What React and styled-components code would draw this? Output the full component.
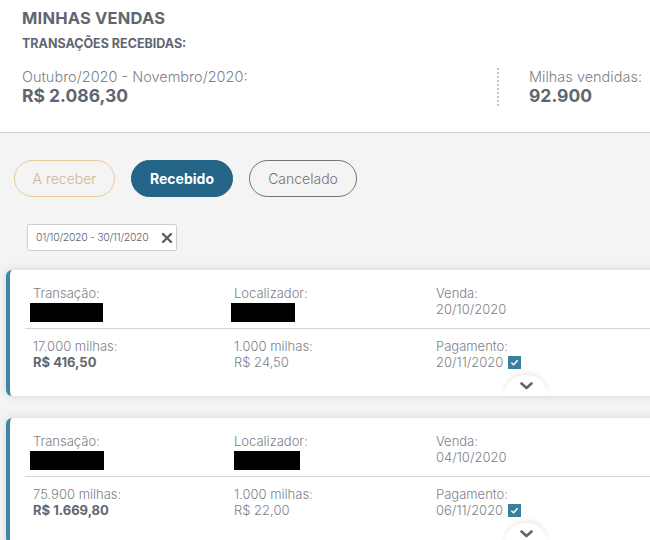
import React from "react";
import styled, { createGlobalStyle } from "styled-components";

const Global = createGlobalStyle`
  html, body { margin: 0; padding: 0; background: #f4f4f4; overflow: hidden; }
  body { font-family: "Inter", "Open Sans", sans-serif; color: #5e6570; }
  * { box-sizing: border-box; }
`;

const Page = styled.div`
  width: 720px;
  min-height: 540px;
  background: #f4f4f4;
`;

const Header = styled.header`
  background: #fff;
  border-bottom: 1px solid #cfcfcf;
  height: 133px;
  padding: 8px 22px 0;
`;

const Title = styled.h1`
  margin: 0;
  font-size: 16.5px;
  line-height: 20px;
  font-weight: 700;
  color: #5f6670;
  letter-spacing: 0.2px;
`;

const Subtitle = styled.h2`
  margin: 9px 0 0;
  font-size: 12.5px;
  line-height: 14px;
  font-weight: 700;
  color: #5f6670;
`;

const Summary = styled.div`
  display: flex;
  align-items: center;
  margin-top: 17px;
`;

const SummaryBlock = styled.div`
  width: ${(p) => p.$w || "auto"};
  display: flex;
  flex-direction: column;
`;

const Separator = styled.div`
  width: 0;
  height: 38px;
  border-left: 2px dotted #c4c4c4;
  margin-right: 30px;
`;

const SumLabel = styled.span`
  font-size: 14.5px;
  line-height: 18px;
  font-weight: 300;
  color: #7c8188;
`;

const SumValue = styled.span`
  font-size: 17.5px;
  line-height: 20px;
  font-weight: 700;
  color: #5f6670;
`;

const Tabs = styled.div`
  display: flex;
  gap: 16px;
  padding: 27px 0 0 14px;
`;

const Tab = styled.button`
  height: 37px;
  border-radius: 19px;
  font-family: inherit;
  font-size: 14px;
  padding: 0;
  width: ${(p) => p.$w}px;
  background: ${(p) => (p.$variant === "active" ? "#236487" : "transparent")};
  border: 1px solid
    ${(p) =>
      p.$variant === "active" ? "#236487" : p.$variant === "warn" ? "#e8c99c" : "#6e737b"};
  color: ${(p) =>
    p.$variant === "active" ? "#fff" : p.$variant === "warn" ? "#d6b48c" : "#6e737b"};
  font-weight: ${(p) => (p.$variant === "active" ? 700 : 300)};
`;

const ChipRow = styled.div`
  padding: 27px 0 0 27px;
`;

const Chip = styled.div`
  width: 150px;
  height: 27px;
  background: #fff;
  border: 1px solid #cfcfcf;
  border-radius: 2px;
  display: flex;
  align-items: center;
  justify-content: space-between;
  padding: 0 3px 0 8px;
  font-size: 10.5px;
  font-weight: 300;
  color: #5e6570;
  letter-spacing: -0.3px;
`;

const List = styled.div`
  display: flex;
  flex-direction: column;
  gap: 22px;
  padding: 19px 0 0 6px;
`;

const Card = styled.div`
  position: relative;
  background: #fff;
  border-left: 4px solid #3f86a3;
  border-radius: 6px 0 0 6px;
  box-shadow: 0 0 10px rgba(0, 0, 0, 0.13);
  padding: 15px 0 26px;
`;

const Row = styled.div`
  display: grid;
  grid-template-columns: 201px 202px 201px;
  padding-left: 23px;
  padding-bottom: ${(p) => p.$pb || 0}px;
`;

const Divider = styled.div`
  height: 1px;
  background: #d4d4d4;
  margin: 0 0 9px 15px;
`;

const Field = styled.div`
  display: flex;
  flex-direction: column;
`;

const Label = styled.span`
  font-size: 13px;
  line-height: 16px;
  font-weight: 300;
  color: #7c8188;
`;

const Value = styled.span`
  font-size: 13px;
  line-height: 16px;
  font-weight: ${(p) => (p.$bold ? 700 : 300)};
  color: ${(p) => (p.$bold ? "#5f6670" : "#7c8188")};
  display: flex;
  align-items: center;
  gap: 5px;
`;

const Redacted = styled.div`
  width: ${(p) => p.$w}px;
  height: 19px;
  background: #000;
  margin: 2px 0 0 ${(p) => p.$ml || 0}px;
`;

const Check = styled.span`
  width: 13px;
  height: 13px;
  background: #3a7f9c;
  display: inline-flex;
  align-items: center;
  justify-content: center;
`;

const Bump = styled.div`
  position: absolute;
  left: 494px;
  bottom: 0;
  width: 44px;
  height: 21px;
  background: #fff;
  border-radius: 22px 22px 0 0;
  box-shadow: 0 -3px 5px rgba(0, 0, 0, 0.07);
  display: flex;
  justify-content: center;
  padding-top: 7px;
`;

const CheckIcon = () => (
  <svg width="9" height="9" viewBox="0 0 10 10">
    <path d="M1.5 5.2 L4 7.5 L8.5 2.5" stroke="#fff" strokeWidth="1.6" fill="none" />
  </svg>
);

const Chevron = () => (
  <svg width="13" height="8" viewBox="0 0 13 8">
    <path d="M1.5 1.5 L6.5 6 L11.5 1.5" stroke="#5e6570" strokeWidth="2.6" fill="none" strokeLinecap="round" strokeLinejoin="round" />
  </svg>
);

const XIcon = () => (
  <svg width="12" height="12" viewBox="0 0 12 12">
    <path d="M2 2 L10 10 M10 2 L2 10" stroke="#5a5f66" strokeWidth="2.4" strokeLinecap="round" />
  </svg>
);

const cards = [
  { t: 73, tl: -3, l: 64, ll: -3, venda: "20/10/2020", milhas: "17.000 milhas:", total: "R$ 416,50", unit: "R$ 24,50", pag: "20/11/2020" },
  { t: 74, tl: -3, l: 66, ll: 0, venda: "04/10/2020", milhas: "75.900 milhas:", total: "R$ 1.669,80", unit: "R$ 22,00", pag: "06/11/2020" },
];

export default function App() {
  return (
    <>
      <Global />
      <Page>
        <Header>
          <Title>MINHAS VENDAS</Title>
          <Subtitle>TRANSAÇÕES RECEBIDAS:</Subtitle>
          <Summary>
            <SummaryBlock $w="475px">
              <SumLabel>Outubro/2020 - Novembro/2020:</SumLabel>
              <SumValue>R$ 2.086,30</SumValue>
            </SummaryBlock>
            <Separator />
            <SummaryBlock>
              <SumLabel>Milhas vendidas:</SumLabel>
              <SumValue>92.900</SumValue>
            </SummaryBlock>
          </Summary>
        </Header>
        <Tabs>
          <Tab $variant="warn" $w={101}>A receber</Tab>
          <Tab $variant="active" $w={102}>Recebido</Tab>
          <Tab $variant="default" $w={108}>Cancelado</Tab>
        </Tabs>
        <ChipRow>
          <Chip>
            <span>01/10/2020 - 30/11/2020</span>
            <XIcon />
          </Chip>
        </ChipRow>
        <List>
          {cards.map((c, i) => (
            <Card key={i}>
              <Row $pb={6}>
                <Field>
                  <Label>Transação:</Label>
                  <Redacted $w={c.t} $ml={c.tl} />
                </Field>
                <Field>
                  <Label>Localizador:</Label>
                  <Redacted $w={c.l} $ml={c.ll} />
                </Field>
                <Field>
                  <Label>Venda:</Label>
                  <Value>{c.venda}</Value>
                </Field>
              </Row>
              <Divider />
              <Row>
                <Field>
                  <Label>{c.milhas}</Label>
                  <Value $bold>{c.total}</Value>
                </Field>
                <Field>
                  <Label>1.000 milhas:</Label>
                  <Value>{c.unit}</Value>
                </Field>
                <Field>
                  <Label>Pagamento:</Label>
                  <Value>
                    {c.pag}
                    <Check>
                      <CheckIcon />
                    </Check>
                  </Value>
                </Field>
              </Row>
              <Bump>
                <Chevron />
              </Bump>
            </Card>
          ))}
        </List>
      </Page>
    </>
  );
}
